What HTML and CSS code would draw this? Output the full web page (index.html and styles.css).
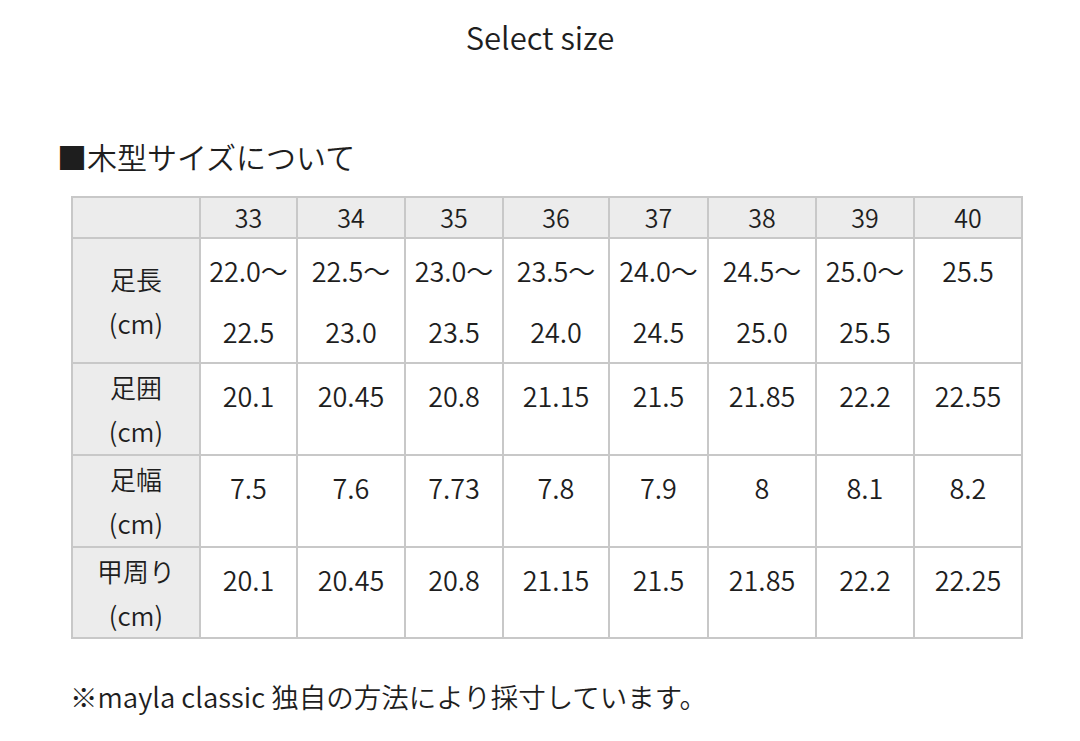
FILE: index.html
```html
<!DOCTYPE html>
<html lang="ja">
<head>
<meta charset="utf-8">
<link rel="stylesheet" href="styles.css">
</head>
<body>
<div class="page">
  <h1 class="top-title">Select size</h1>
  <h2 class="section-title">■木型サイズについて</h2>
  <table class="size-table">
    <colgroup>
      <col class="c-head"><col class="c1"><col class="c2"><col class="c3"><col class="c4"><col class="c5"><col class="c6"><col class="c7"><col class="c8">
    </colgroup>
    <thead>
      <tr class="hrow">
        <th></th><th>33</th><th>34</th><th>35</th><th>36</th><th>37</th><th>38</th><th>39</th><th>40</th>
      </tr>
    </thead>
    <tbody>
      <tr class="r-len">
        <th class="rh">足長<br>(cm)</th>
        <td><span class="l1">22.0〜</span><span class="l2">22.5</span></td>
        <td><span class="l1">22.5〜</span><span class="l2">23.0</span></td>
        <td><span class="l1">23.0〜</span><span class="l2">23.5</span></td>
        <td><span class="l1">23.5〜</span><span class="l2">24.0</span></td>
        <td><span class="l1">24.0〜</span><span class="l2">24.5</span></td>
        <td><span class="l1">24.5〜</span><span class="l2">25.0</span></td>
        <td><span class="l1">25.0〜</span><span class="l2">25.5</span></td>
        <td><span class="l1">25.5</span></td>
      </tr>
      <tr class="r-std">
        <th class="rh">足囲<br>(cm)</th>
        <td>20.1</td><td>20.45</td><td>20.8</td><td>21.15</td><td>21.5</td><td>21.85</td><td>22.2</td><td>22.55</td>
      </tr>
      <tr class="r-std">
        <th class="rh">足幅<br>(cm)</th>
        <td>7.5</td><td>7.6</td><td>7.73</td><td>7.8</td><td>7.9</td><td>8</td><td>8.1</td><td>8.2</td>
      </tr>
      <tr class="r-std r-last">
        <th class="rh">甲周り<br>(cm)</th>
        <td>20.1</td><td>20.45</td><td>20.8</td><td>21.15</td><td>21.5</td><td>21.85</td><td>22.2</td><td>22.25</td>
      </tr>
    </tbody>
  </table>
  <p class="note">※mayla classic 独自の方法により採寸しています。</p>
</div>
</body>
</html>
```

FILE: styles.css
```css
html, body {
  margin: 0;
  padding: 0;
  background: #ffffff;
}
body {
  font-family: "Noto Sans CJK JP", "Noto Sans", sans-serif;
  font-weight: 350;
  color: #1e1e1e;
}
.page {
  width: 1080px;
  height: 741px;
  overflow: hidden;
  display: flex;
  flex-direction: column;
}
.top-title {
  margin: 15px 0 0 0;
  font-size: 31px;
  font-weight: 350;
  line-height: 44px;
  text-align: center;
}
.section-title {
  margin: 76px 0 0 57px;
  font-size: 30px;
  font-weight: 350;
  line-height: 42px;
}
.size-table {
  margin: 19px 0 0 71px;
  border-collapse: collapse;
  table-layout: fixed;
  width: 952px;
}
.c-head { width: 128px; }
.c1 { width: 97px; }
.c2 { width: 108px; }
.c3 { width: 98px; }
.c4 { width: 106px; }
.c5 { width: 99px; }
.c6 { width: 108px; }
.c7 { width: 98px; }
.c8 { width: 108px; }
.size-table th,
.size-table td {
  border: 2px solid #c8c8c8;
  padding: 0;
  text-align: center;
  font-weight: 350;
}
.hrow th {
  background: #ececec;
  height: 39px;
  font-size: 25px;
  line-height: 39px;
}
.rh {
  background: #ececec;
  font-size: 26px;
  line-height: 44px;
  vertical-align: middle;
}
.size-table td {
  font-size: 27px;
  line-height: 32px;
  vertical-align: top;
  padding-top: 16px;
}
.r-len td { height: 107px; }
.r-std td { height: 74px; }
.r-last td { height: 73px; }
.l1, .l2 {
  display: block;
}
.l2 {
  margin-top: 29px;
}
.note {
  margin: 39px 0 0 70px;
  font-size: 27.5px;
  line-height: 36px;
}
```
